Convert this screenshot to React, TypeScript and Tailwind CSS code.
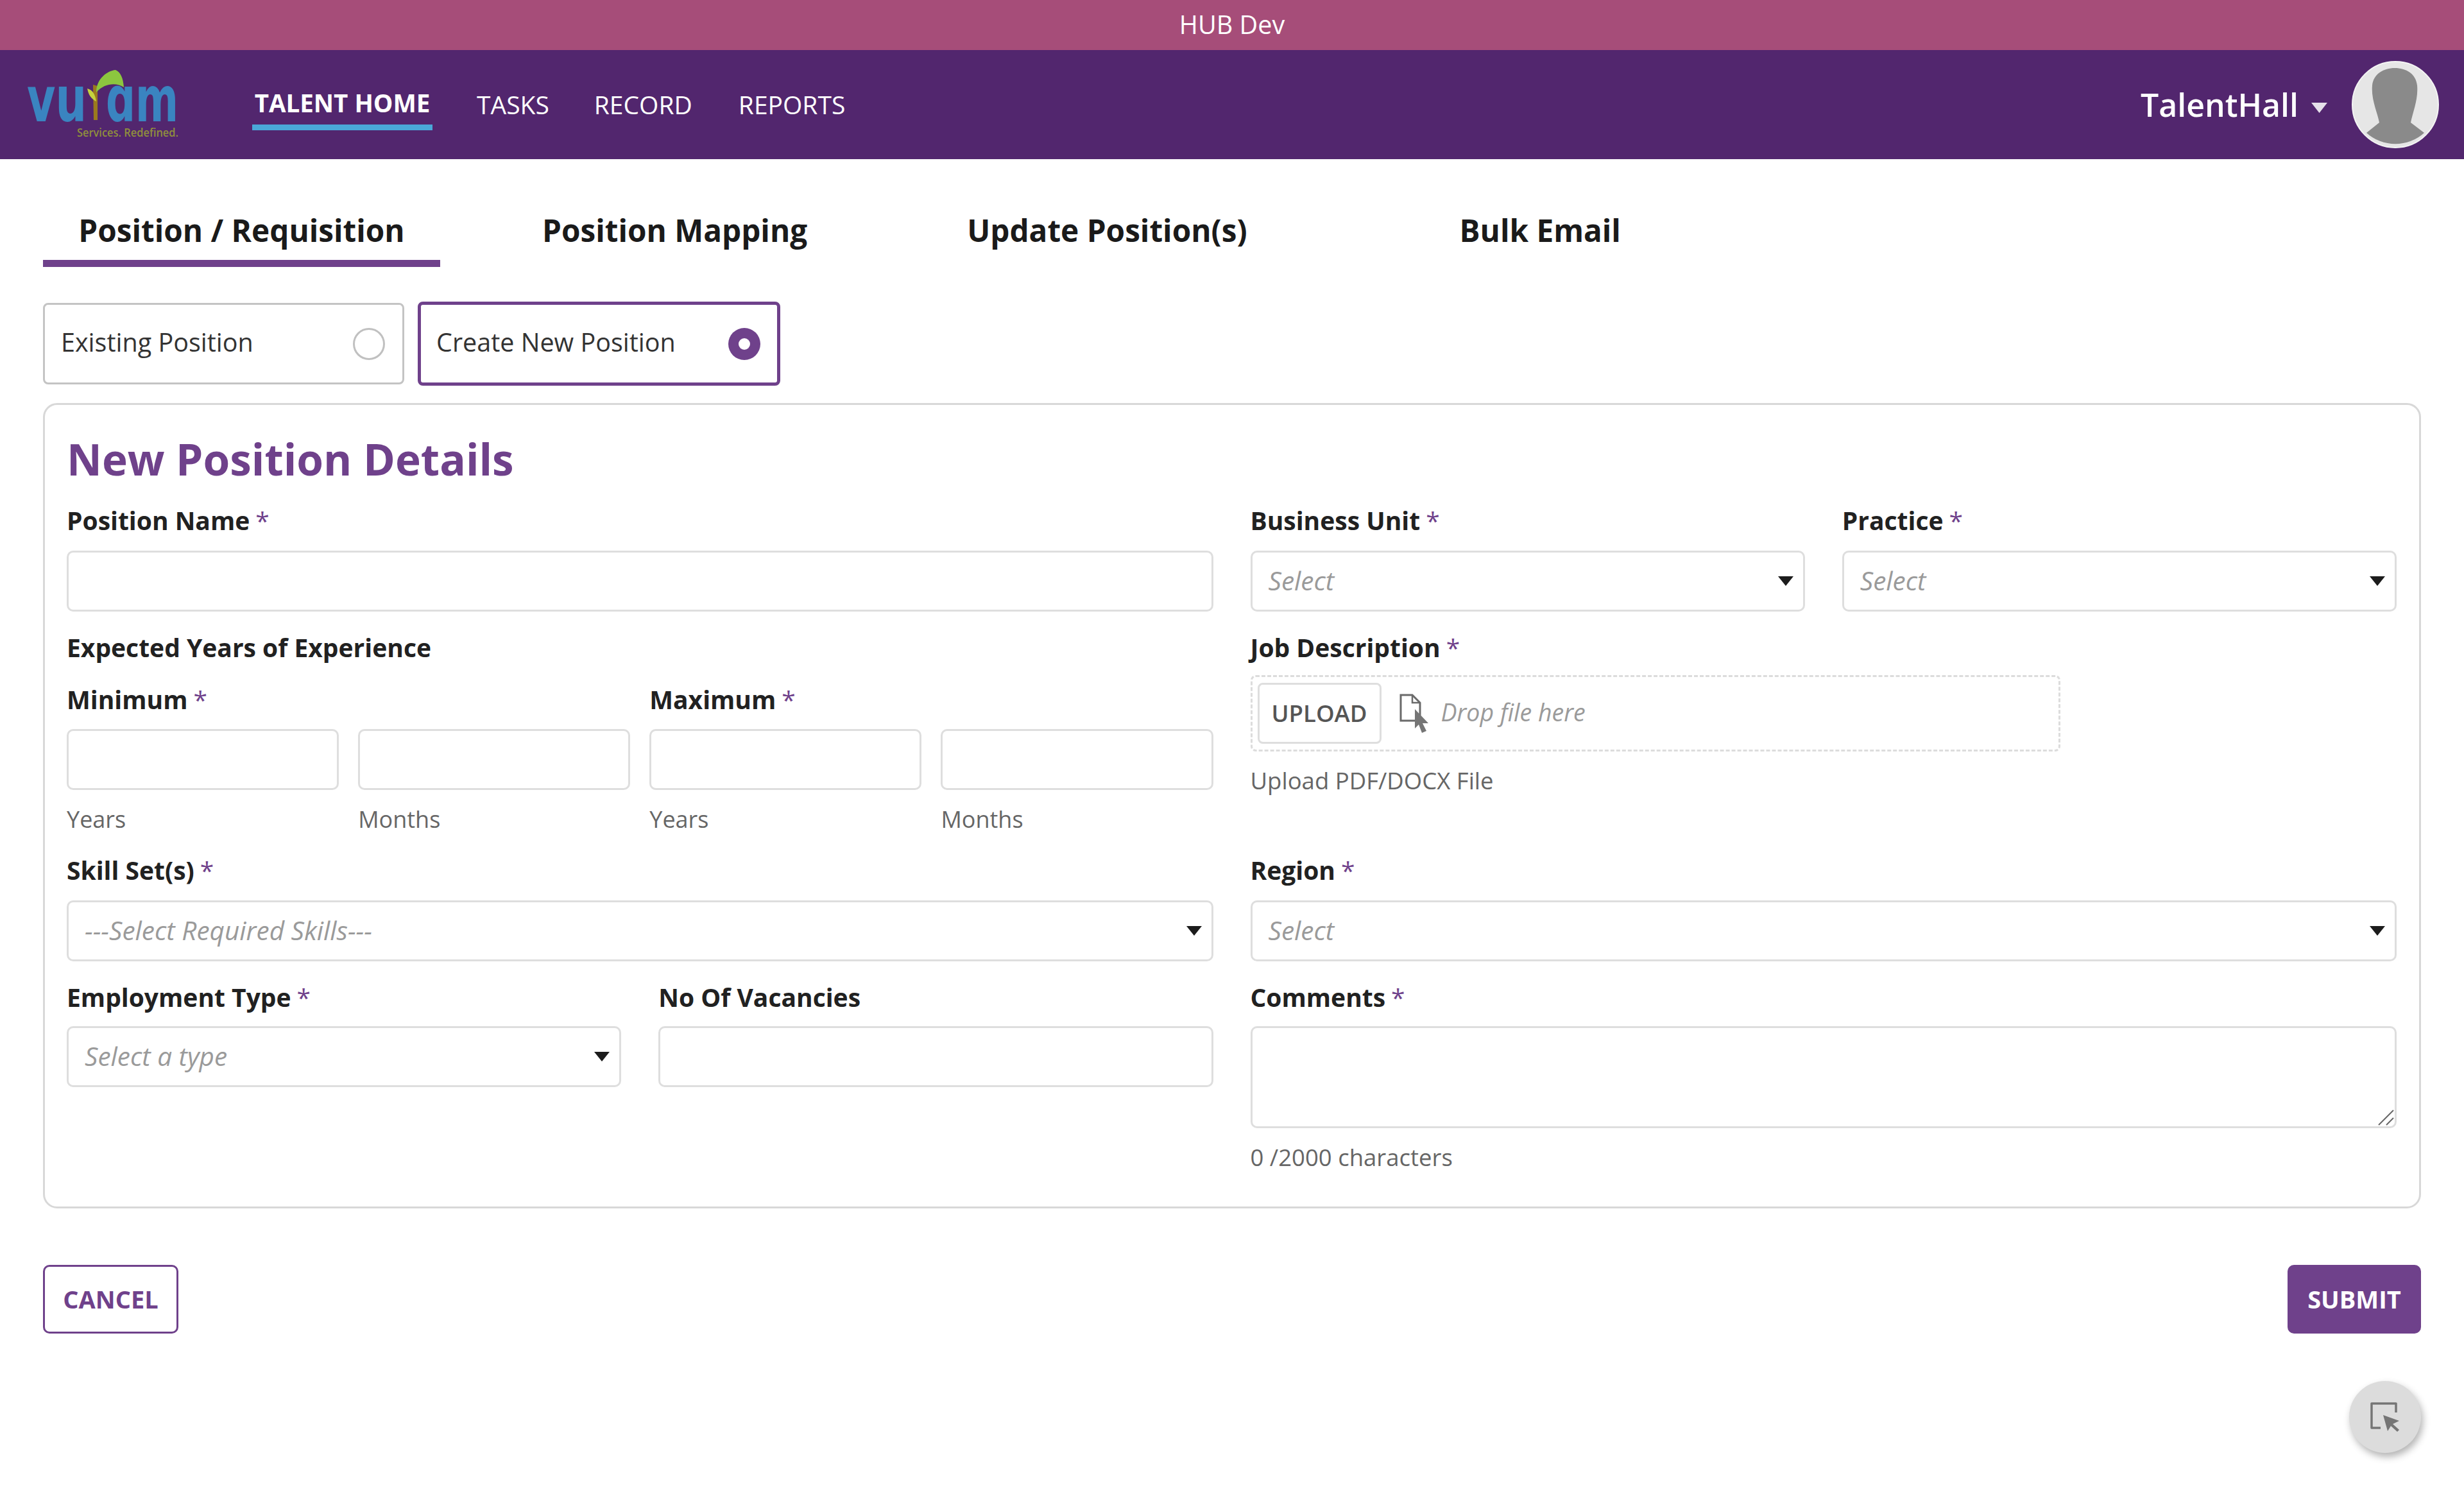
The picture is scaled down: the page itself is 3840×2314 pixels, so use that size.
import React from "react";

const Req = () => <span className="text-[#6f418b] font-normal ml-[9px]">*</span>;

const Label = ({ text, req = true, cls = "" }: { text: string; req?: boolean; cls?: string }) => (
  <div className={`h-[50px] leading-[50px] text-[39px] font-bold text-[#212121] whitespace-nowrap ${cls}`}>
    {text}
    {req && <Req />}
  </div>
);

const Caption = ({ text, size = "text-[36.5px]" }: { text: string; size?: string }) => (
  <div className={`h-[50px] leading-[50px] ${size} text-[#666666] whitespace-nowrap`}>{text}</div>
);

const UnitCaption = ({ text }: { text: string }) => (
  <div className="mt-[22px] h-[47px] leading-[47px] text-[36px] text-[#666666] whitespace-nowrap">{text}</div>
);

const TextInput = () => (
  <input className="block w-full h-[95px] rounded-[10px] border-[3px] border-[#dedede] bg-white outline-none" />
);

const Caret = () => (
  <svg width="24" height="15" viewBox="0 0 24 15" className="shrink-0">
    <polygon points="0,0 24,0 12,15" fill="#1c1c1c" />
  </svg>
);

const Select = ({ text }: { text: string }) => (
  <div className="flex items-center justify-between h-[95px] rounded-[10px] border-[3px] border-[#dedede] bg-white pl-[25px] pr-[15px]">
    <span className="text-[40.5px] italic text-[#9a9a9a] whitespace-nowrap">{text}</span>
    <Caret />
  </div>
);

const Logo = () => (
  <svg width="300" height="135" viewBox="0 -20 300 135" className="block mb-[16px] shrink-0">
    <text x="0" y="81" fontFamily="'DejaVu Sans', sans-serif" fontWeight="700" fontSize="98" fill="#3a84c0" textLength="93" lengthAdjust="spacingAndGlyphs">vu</text>
    <text x="123" y="81" fontFamily="'DejaVu Sans', sans-serif" fontWeight="700" fontSize="98" fill="#3a84c0" textLength="113" lengthAdjust="spacingAndGlyphs">ɑm</text>
    <path d="M103 24 L104 79 L110 79 L110 26 Z" fill="#9a7a1e" />
    <path d="M94 30 C102 32 106 38 108 50 C100 46 96 40 94 30 Z" fill="#c6d23e" />
    <path d="M108 36 C108 14 126 2 138 1 C146 4 150 14 151 28 C139 20 120 22 108 36 Z" fill="#8cc63f" />
    <text x="78" y="105" fontFamily="'Open Sans', sans-serif" fontWeight="600" fontSize="18" fill="#8f8f3c" textLength="158" lengthAdjust="spacingAndGlyphs">Services. Redefined.</text>
  </svg>
);

const Avatar = () => (
  <svg width="136" height="136" viewBox="0 0 136 136" className="block">
    <circle cx="68" cy="68" r="67" fill="#e6e6e6" stroke="#f4f4f4" strokeWidth="2" />
    <path d="M23 112 L43 96 C40 80 30 60 32 38 C34 20 50 11 67 11 C85 11 100 20 102 38 C104 60 95 80 92 96 L113 112 A67 67 0 0 1 23 112 Z" fill="#8a8a8a" />
  </svg>
);

const DropIcon = () => (
  <svg width="50" height="62" viewBox="0 0 50 62" className="block shrink-0">
    <path d="M3 2 H21 L33 14 V42 H3 Z" fill="none" stroke="#6a6a6a" strokeWidth="3" />
    <path d="M21 2 V14 H33" fill="none" stroke="#6a6a6a" strokeWidth="2.5" />
    <path d="M25 24 L46 46 L37 46 L43 58 L36 61 L31 48 L25 54 Z" fill="#757575" />
  </svg>
);

const FloatIcon = () => (
  <svg width="48" height="48" viewBox="0 0 48 48" className="block">
    <path d="M17 41 H3 V3 H41 V17" fill="none" stroke="#757575" strokeWidth="3.5" strokeLinejoin="round" />
    <path d="M21 21 L46 30 L36 35 L46 44 L43 47 L33 38 L28 46 Z" fill="#757575" />
  </svg>
);

export default function App() {
  const font = { fontFamily: "'Open Sans', sans-serif" };
  return (
    <div className="relative w-full h-[2314px] overflow-hidden bg-white" style={font}>
      <div className="h-[78px] bg-[#a64d79] flex items-center justify-center text-[39.5px] text-white">HUB Dev</div>

      <header className="h-[170px] bg-[#52266e] flex items-center pl-[42px] pr-[39px]">
        <Logo />
        <nav className="flex items-center ml-[51px] text-[39px] text-white h-full">
          <div className="flex flex-col items-center font-bold w-[281px] pt-[10px]">
            <span className="h-[52px] leading-[52px] text-[38.5px]">TALENT HOME</span>
            <span className="w-full h-[9px] mt-[8px] bg-[#4aa8d8]" />
          </div>
          <span className="ml-[69px] font-normal">TASKS</span>
          <span className="ml-[70px] font-normal">RECORD</span>
          <span className="ml-[72px] font-normal">REPORTS</span>
        </nav>
        <div className="ml-auto flex items-center">
          <span className="text-[50px] font-semibold text-white">TalentHall</span>
          <svg width="25" height="16" viewBox="0 0 25 16" className="ml-[20px] mt-[10px]">
            <polygon points="0,0 25,0 12.5,16" fill="#e6e0ea" />
          </svg>
          <div className="ml-[38px]"><Avatar /></div>
        </div>
      </header>

      <main className="px-[67px]">
        <div className="flex pt-[62px] text-[47.7px] font-bold text-[#1a1a1a]">
          <div className="h-[106px] w-[619px] border-b-[11px] border-[#6f418b] flex justify-center items-center pt-[2px]">Position / Requisition</div>
          <div className="h-[106px] ml-[159px] flex items-center pb-[9px]">Position Mapping</div>
          <div className="h-[106px] ml-[249px] flex items-center pb-[9px]">Update Position(s)</div>
          <div className="h-[106px] ml-[331px] flex items-center pb-[9px]">Bulk Email</div>
        </div>

        <div className="flex items-center gap-[21px] mt-[54px]">
          <div className="w-[563px] h-[127px] rounded-[8px] border-[3px] border-[#c4c4c4] flex items-center justify-between pl-[25px] pr-[27px] text-[39.5px] text-[#333333]">
            <span className="mb-[3px]">Existing Position</span>
            <span className="w-[50px] h-[50px] rounded-full border-[3px] border-[#c0c0c0]" />
          </div>
          <div className="w-[565px] h-[131px] rounded-[8px] border-[5px] border-[#6f418b] flex items-center justify-between pl-[24px] pr-[26px] text-[39.5px] text-[#333333]">
            <span className="mb-[3px]">Create New Position</span>
            <span className="w-[50px] h-[50px] rounded-full bg-[#6f418b] flex items-center justify-center">
              <span className="w-[18px] h-[18px] rounded-full bg-white" />
            </span>
          </div>
        </div>

        <section className="mt-[27px] rounded-[22px] border-[3px] border-[#d8d8d8] pl-[34px] pr-[35px] pt-[49px] pb-[52px]">
          <h1 className="h-[70px] leading-[70px] text-[67.5px] font-bold text-[#6f418b] mb-[36px]">New Position Details</h1>

          <div className="grid grid-cols-2 gap-x-[58px] gap-y-[31px]">
            <div>
              <Label text="Position Name" cls="mb-[22px]" />
              <TextInput />
            </div>
            <div className="grid grid-cols-2 gap-x-[58px]">
              <div>
                <Label text="Business Unit" cls="mb-[22px]" />
                <Select text="Select" />
              </div>
              <div>
                <Label text="Practice" cls="mb-[22px]" />
                <Select text="Select" />
              </div>
            </div>

            <div>
              <Label text="Expected Years of Experience" req={false} cls="mb-[31px]" />
              <div className="grid grid-cols-2 gap-x-[30px]">
                <div>
                  <Label text="Minimum" cls="mb-[21px]" />
                  <div className="grid grid-cols-2 gap-x-[30px]">
                    <div><TextInput /><UnitCaption text="Years" /></div>
                    <div><TextInput /><UnitCaption text="Months" /></div>
                  </div>
                </div>
                <div>
                  <Label text="Maximum" cls="mb-[21px]" />
                  <div className="grid grid-cols-2 gap-x-[30px]">
                    <div><TextInput /><UnitCaption text="Years" /></div>
                    <div><TextInput /><UnitCaption text="Months" /></div>
                  </div>
                </div>
              </div>
            </div>
            <div>
              <Label text="Job Description" cls="mb-[18px]" />
              <div className="w-[1262px] h-[119px] rounded-[8px] border-[3px] border-dashed border-[#dcdcdc] flex items-center pl-[8px]">
                <div className="w-[193px] h-[95px] rounded-[8px] border-[3px] border-[#dedede] flex items-center justify-center text-[36.5px] font-semibold text-[#555555]">UPLOAD</div>
                <div className="ml-[27px]"><DropIcon /></div>
                <span className="ml-[16px] mb-[3px] text-[37.5px] italic text-[#9a9a9a]">Drop file here</span>
              </div>
              <div className="mt-[20px]"><Caption text="Upload PDF/DOCX File" /></div>
            </div>

            <div>
              <Label text="Skill Set(s)" cls="mb-[22px]" />
              <Select text="---Select Required Skills---" />
            </div>
            <div>
              <Label text="Region" cls="mb-[22px]" />
              <Select text="Select" />
            </div>

            <div className="grid grid-cols-2 gap-x-[58px] items-start">
              <div>
                <Label text="Employment Type" cls="mb-[20px]" />
                <Select text="Select a type" />
              </div>
              <div>
                <Label text="No Of Vacancies" req={false} cls="mb-[20px]" />
                <TextInput />
              </div>
            </div>
            <div>
              <Label text="Comments" cls="mb-[20px]" />
              <div className="relative">
                <textarea className="block w-full h-[159px] resize-none rounded-[10px] border-[3px] border-[#dedede] bg-white outline-none" />
                <svg width="26" height="25" viewBox="0 0 26 25" className="absolute right-[3px] bottom-[4px]">
                  <path d="M1 24 L24 1 M13 24 L24 13" stroke="#666666" strokeWidth="2" fill="none" />
                </svg>
              </div>
              <div className="mt-[20px]"><Caption text="0 /2000 characters" /></div>
            </div>
          </div>
        </section>

        <div className="flex justify-between mt-[88px]">
          <div className="w-[211px] h-[107px] rounded-[10px] border-[3px] border-[#6f418b] flex items-center justify-center text-[38px] font-bold text-[#6f418b]">CANCEL</div>
          <div className="w-[208px] h-[107px] rounded-[10px] bg-[#6f418b] flex items-center justify-center text-[38px] font-bold text-white">SUBMIT</div>
        </div>
      </main>

      <div className="absolute right-[67px] top-[2152px] w-[112px] h-[112px] rounded-full bg-[#dcdcdc] shadow-[3px_6px_12px_rgba(0,0,0,0.3)] flex items-center justify-center">
        <FloatIcon />
      </div>
    </div>
  );
}
